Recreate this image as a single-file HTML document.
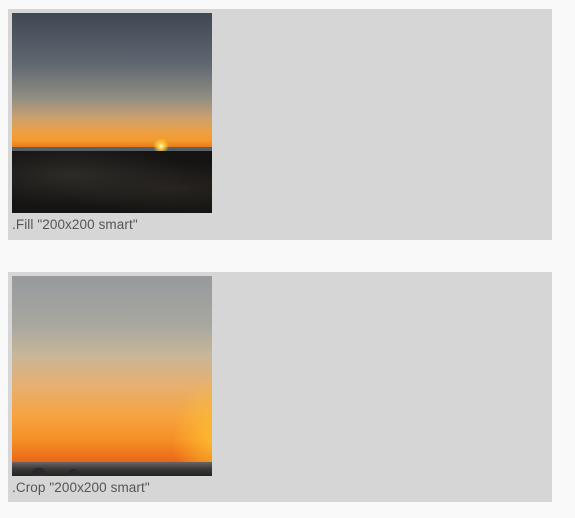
<!DOCTYPE html>
<html><head><style>
body{margin:0;background:#f9f9f9;width:575px;height:518px;position:relative;overflow:hidden;font-family:"Liberation Sans",sans-serif}
.box{position:absolute;left:8px;width:544px;background:#d6d6d6}
.img{position:absolute;left:4px;top:4px;width:200px;height:200px;overflow:hidden}
.cap{position:absolute;left:4px;font-size:13.5px;color:#555;letter-spacing:0.1px}
</style></head><body>
<div class="box" style="top:9px;height:231px">
 <div class="img" style="background:linear-gradient(#3f4752 0%,#5f6670 25%,#8e8c83 42%,#c9a070 52%,#f0a040 60%,#f39a2a 64%,#e0701a 68%,#c9601f 70%,#2f2d2a 71%,#1c1a18 80%,#131212 100%)">
  <div style="position:absolute;left:0;top:134px;width:200px;height:4px;background:#5a6068"></div>
  <div style="position:absolute;left:141px;top:125px;width:16px;height:16px;border-radius:50%;background:radial-gradient(#fffbd0 0%,#ffd040 25%,rgba(255,150,30,0) 70%)"></div>
  <div style="position:absolute;left:0;top:138px;width:200px;height:62px;background:radial-gradient(ellipse at 30% 40%,#2e2b27,transparent 60%),radial-gradient(ellipse at 80% 60%,#28241f,transparent 50%),#151413"></div>
 </div>
 <div class="cap" style="top:208px">.Fill "200x200 smart"</div>
</div>
<div class="box" style="top:272px;height:230px">
 <div class="img" style="background:linear-gradient(#969a9d 0%,#a8a8a0 25%,#c8b698 40%,#e7b070 55%,#f6a340 70%,#f58f25 82%,#ec6a18 92%,#d85a18 94%)">
  <div style="position:absolute;right:0;top:100px;width:40px;height:90px;background:radial-gradient(ellipse at 100% 70%,rgba(255,200,50,0.7),transparent 70%)"></div>
  <div style="position:absolute;left:0;top:186px;width:200px;height:14px;background:linear-gradient(#6a6566,#3a3737 50%,#252323)"></div>
  <div style="position:absolute;left:20px;top:192px;width:14px;height:8px;border-radius:6px 6px 0 0;background:#2a2828"></div>
  <div style="position:absolute;left:55px;top:193px;width:12px;height:7px;border-radius:6px 6px 0 0;background:#2a2828"></div>
 </div>
 <div class="cap" style="top:208px">.Crop "200x200 smart"</div>
</div>
</body></html>
